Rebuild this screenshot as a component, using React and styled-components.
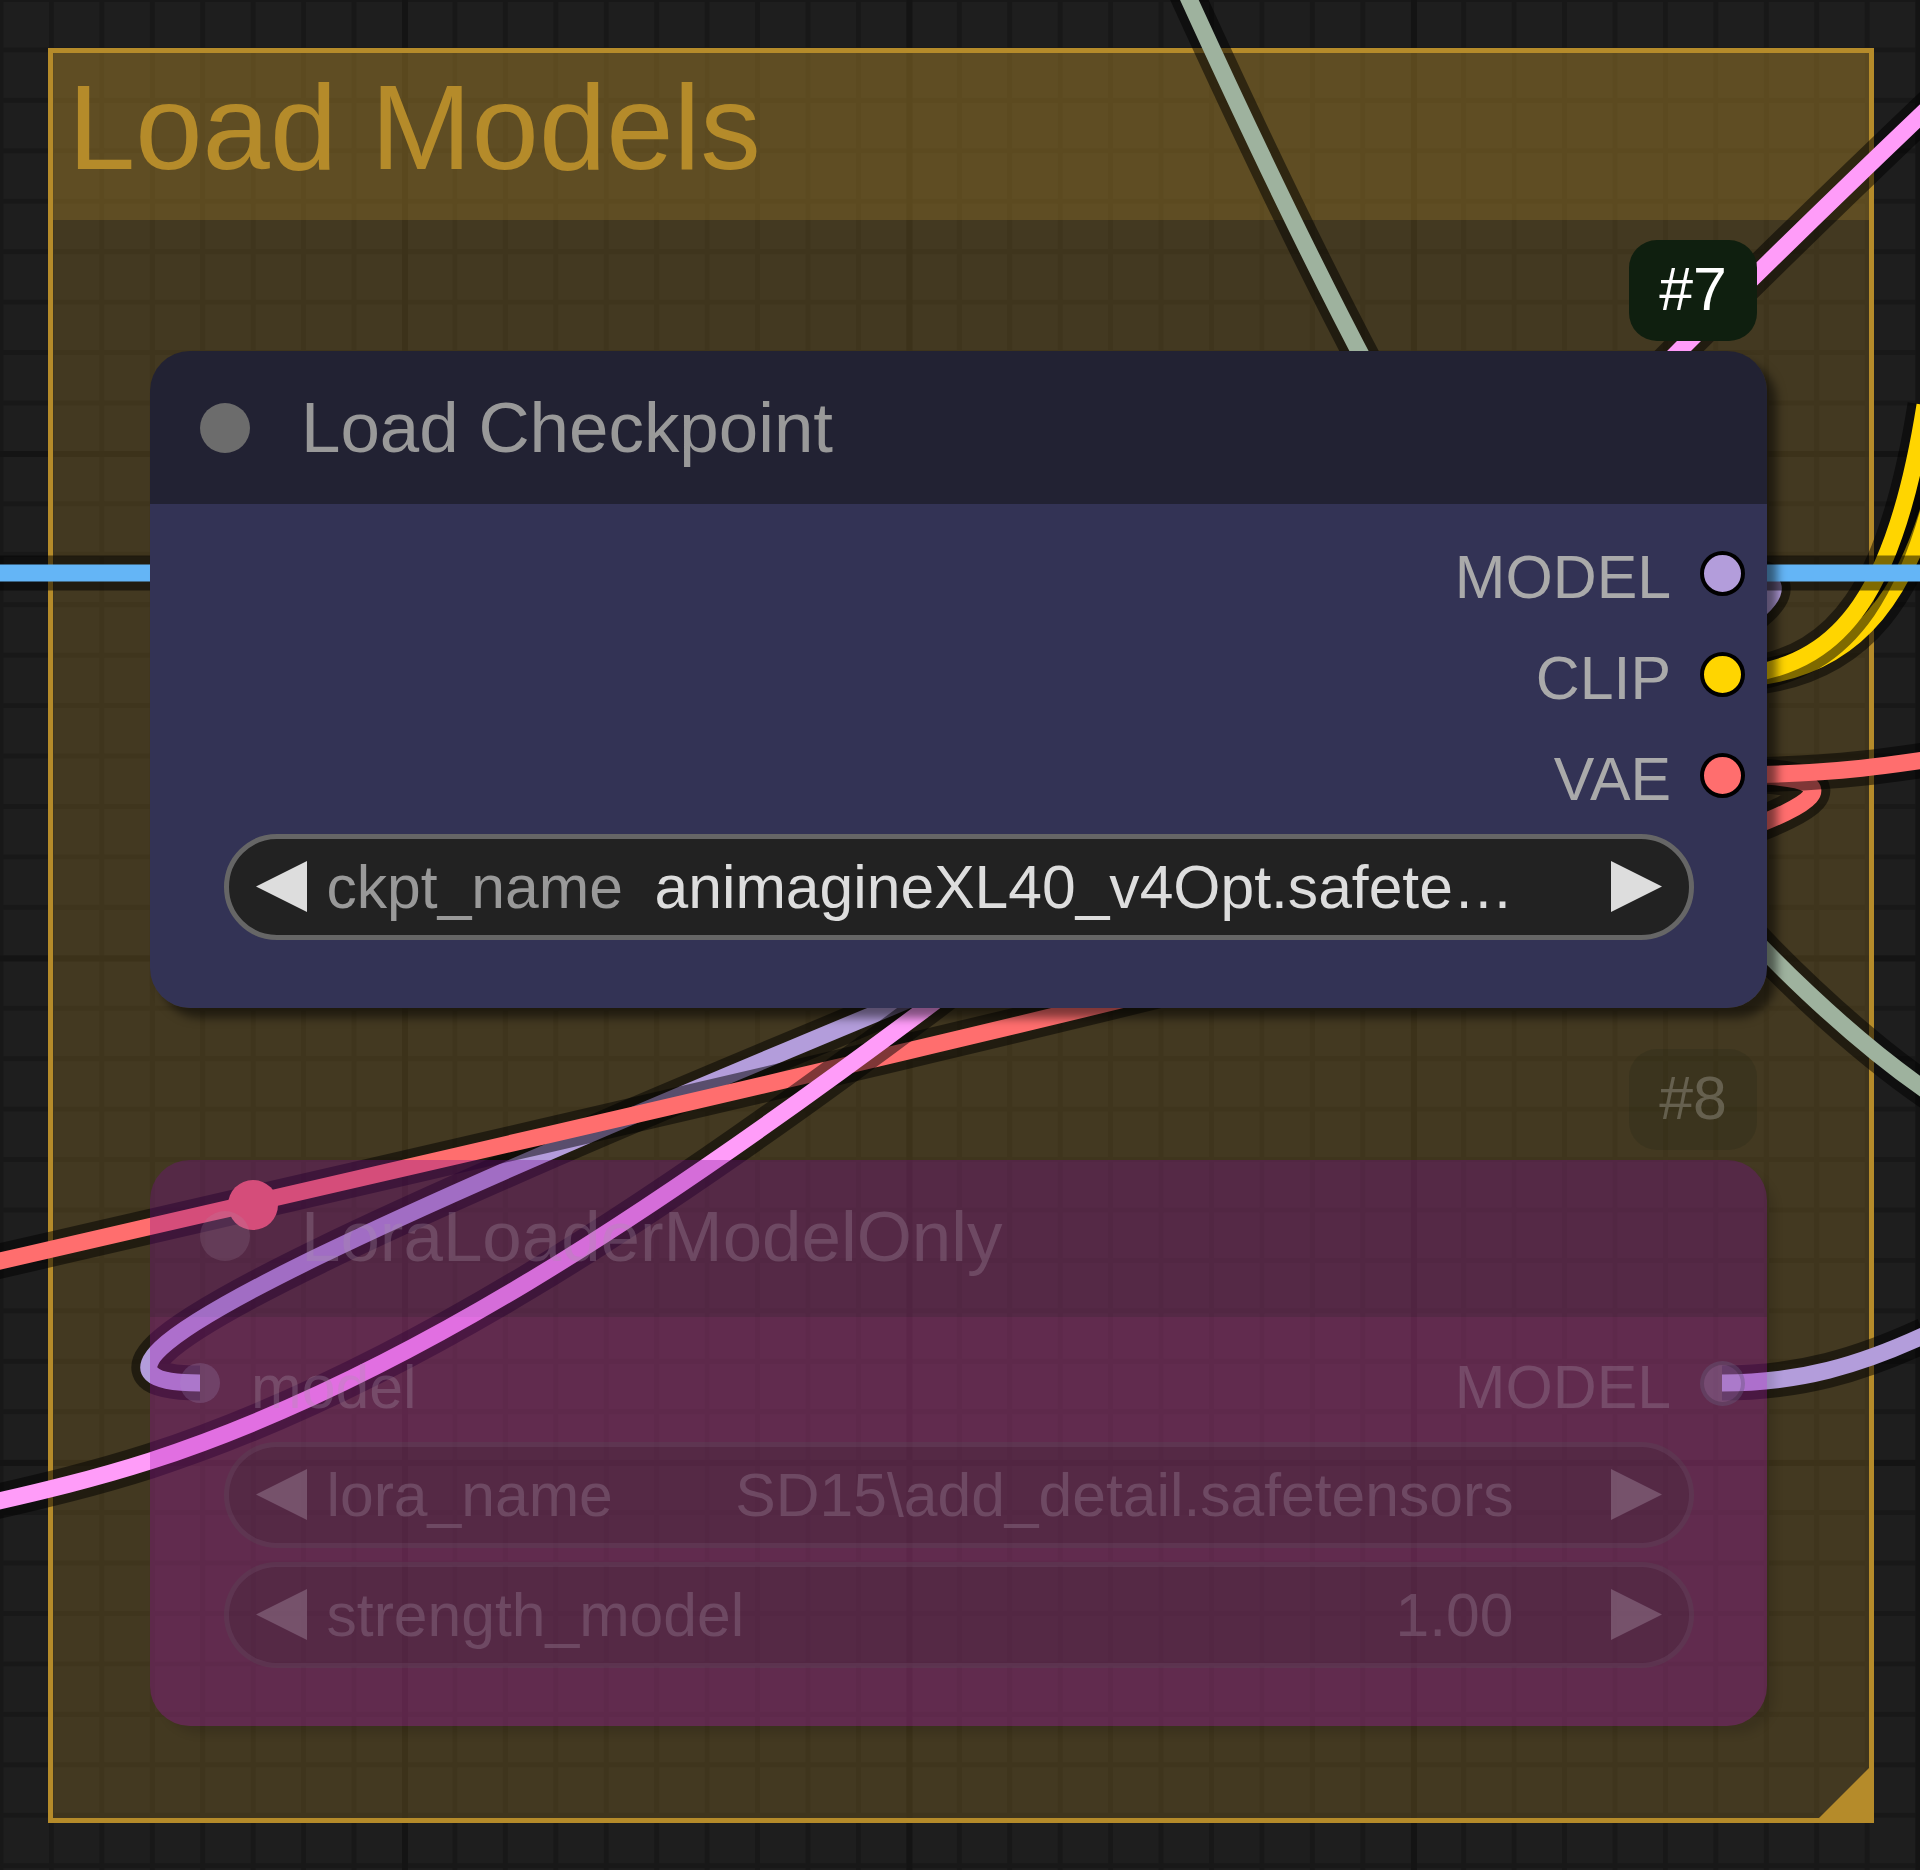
import React from "react";
import styled, { createGlobalStyle } from "styled-components";

const Global = createGlobalStyle`
  html, body { margin: 0; padding: 0; background: #1e1e1e; }
  #root { width: 1920px; height: 1870px; }
`;

const Canvas = styled.div`
  position: relative;
  width: 1920px;
  height: 1870px;
  overflow: hidden;
  font-family: "Liberation Sans", Arial, sans-serif;
  background-color: #1e1e1e;
  background-image:
    linear-gradient(to right, #141414 6px, transparent 6px),
    linear-gradient(to bottom, #141414 6px, transparent 6px),
    linear-gradient(to right, #181818 5px, transparent 5px),
    linear-gradient(to bottom, #181818 5px, transparent 5px);
  background-size: 504.5px 504.5px, 504.5px 504.5px, 50.45px 50.45px, 50.45px 50.45px;
  background-position: 402px 451px, 402px 451px, -1.5px -3px, -1.5px -3px;
`;

const Group = styled.section`
  position: absolute;
  left: 48px;
  top: 48px;
  width: 1826px;
  height: 1775px;
  box-sizing: border-box;
  border: 5px solid #b58b2a;
  background: rgba(181, 139, 42, 0.25);
`;

const GroupHeader = styled.header`
  height: 167px;
  box-sizing: border-box;
  padding: 7px 0 0 15px;
  background: rgba(181, 139, 42, 0.25);
`;

const GroupTitle = styled.h1`
  margin: 0;
  font-size: 121px;
  font-weight: 400;
  line-height: 135px;
  color: #b58b2a;
`;

const Resizer = styled.svg`
  position: absolute;
  right: 0;
  bottom: 0;
  width: 50px;
  height: 50px;
`;

const Links = styled.svg`
  position: absolute;
  inset: 0;
  width: 1920px;
  height: 1870px;
  fill: none;
`;

const Node = styled.article`
  position: absolute;
  left: 150px;
  top: ${(p) => p.$top}px;
  width: 1617px;
  border-radius: 40px;
  display: flex;
  flex-direction: column;
  box-shadow: ${(p) =>
    p.$bypassed
      ? "10px 10px 10px -2px rgba(0, 0, 0, 0.12)"
      : "10px 10px 10px rgba(0, 0, 0, 0.5)"};
`;

const NodeTitle = styled.header`
  height: ${(p) => (p.$bypassed ? 157 : 153)}px;
  box-sizing: border-box;
  padding: 0 0 ${(p) => (p.$bypassed ? 4 : 0)}px 50px;
  display: flex;
  align-items: center;
  gap: 51px;
  border-radius: 40px 40px 0 0;
  font-size: 70.9px;
  color: ${(p) => (p.$bypassed ? "rgba(170, 150, 170, 0.3)" : "#999999")};
  background: ${(p) => (p.$bypassed ? "rgba(125, 10, 150, 0.32)" : "#222233")};
`;

const TitleDot = styled.span`
  width: 50px;
  height: 50px;
  border-radius: 50%;
  flex: none;
  background: ${(p) => (p.$bypassed ? "rgba(170, 150, 170, 0.18)" : "#6c6c6c")};
`;

const NodeBody = styled.div`
  box-sizing: border-box;
  height: ${(p) => p.$height}px;
  padding: ${(p) => p.$padTop}px 0 0;
  display: flex;
  flex-direction: column;
  border-radius: 0 0 40px 40px;
  background: ${(p) => (p.$bypassed ? "rgba(163, 15, 175, 0.32)" : "#333355")};
`;

const SlotRow = styled.div`
  height: 101px;
  flex: none;
  display: flex;
  align-items: center;
  padding: 0 22.5px 0 30px;
`;

const SlotLabel = styled.span`
  font-size: 60.8px;
  line-height: 70px;
  padding-top: 7px;
  color: ${(p) => (p.$bypassed ? "rgba(170, 150, 170, 0.3)" : "#aaaaaa")};
  margin-left: ${(p) => (p.$input ? "31px" : "auto")};
`;

const OutputDot = styled.span`
  width: 45px;
  height: 45px;
  box-sizing: border-box;
  flex: none;
  margin-left: 28.5px;
  border-radius: 50%;
  border: 4.5px solid ${(p) => (p.$bypassed ? "rgba(0, 0, 0, 0.16)" : "#000000")};
  background: ${(p) => p.$color};
`;

const InputDot = styled.span`
  width: 40px;
  height: 40px;
  flex: none;
  border-radius: 50%;
  background: ${(p) => p.$color};
`;

const Widget = styled.div`
  flex: none;
  box-sizing: border-box;
  width: 1470px;
  height: 106px;
  margin: ${(p) => p.$top}px 0 0 73.5px;
  padding: 0 27px;
  display: flex;
  align-items: center;
  border-radius: 53px;
  font-size: 60.6px;
  white-space: nowrap;
  border: 5px solid ${(p) => (p.$bypassed ? "rgba(150, 130, 150, 0.14)" : "#666666")};
  background: ${(p) => (p.$bypassed ? "rgba(34, 34, 34, 0.18)" : "#222222")};
`;

const Arrow = styled.svg`
  width: 51px;
  height: 51px;
  flex: none;
  fill: ${(p) => (p.$bypassed ? "rgba(190, 170, 190, 0.32)" : "#dddddd")};
`;

const WidgetLabel = styled.span`
  margin-left: 20px;
  color: ${(p) => (p.$bypassed ? "rgba(170, 150, 170, 0.3)" : "#999999")};
`;

const WidgetValue = styled.span`
  margin-left: auto;
  margin-right: 97px;
  color: ${(p) => (p.$bypassed ? "rgba(170, 150, 170, 0.3)" : "#dddddd")};
`;

const Badge = styled.div`
  position: absolute;
  right: 10px;
  top: ${(p) => p.$top}px;
  width: 128px;
  height: 101px;
  box-sizing: border-box;
  padding-bottom: ${(p) => (p.$faded ? 4 : 2)}px;
  border-radius: 28px;
  display: flex;
  align-items: center;
  justify-content: center;
  font-size: 60.8px;
  color: ${(p) => (p.$faded ? "rgba(255, 255, 255, 0.22)" : "#ffffff")};
  background: ${(p) => (p.$faded ? "rgba(15, 31, 15, 0.14)" : "#0f1f0f")};
`;

const LinkPath = ({ d, color }) => (
  <g>
    <path d={d} stroke="rgba(0,0,0,0.5)" strokeWidth="35" />
    <path d={d} stroke={color} strokeWidth="17" />
  </g>
);

const links = [
  { d: "M1178,-25 C1228,85 1295,230 1370,372", color: "#9eb29e" },
  { d: "M1700,880 C1760,950 1850,1040 1940,1100", color: "#9eb29e" },
  { d: "M1722,573 C2147,573 -225,1383 200,1383", color: "#b39ddb" },
  { d: "M1722,775 C2508,775 -2086,1650 -1300,1650", color: "#ff6e6e" },
  { d: "M1722,775 C1900,775 1950,750 2200,720", color: "#ff6e6e" },
  { d: "M1750,678 C1850,668 1920,605 1950,415", color: "#ffd500" },
  { d: "M1750,674 C1840,660 1895,595 1925,405", color: "#ffd500" },
  { d: "M-10,573 H1930", color: "#64b5f6" },
  {
    d: "M1960,78 C1880,154 1780,250 1680,350 C1450,585 1150,840 925,1009 C650,1215 400,1380 150,1461 C100,1477 50,1490 -50,1512",
    color: "#ff9cf9",
  },
  { d: "M1722,1383 C1800,1383 1860,1365 1925,1335", color: "#b39ddb" },
];

const LeftArrow = ({ $bypassed }) => (
  <Arrow viewBox="0 0 51 51" $bypassed={$bypassed}>
    <polygon points="0,25.5 51,0 51,51" />
  </Arrow>
);

const RightArrow = ({ $bypassed }) => (
  <Arrow viewBox="0 0 51 51" $bypassed={$bypassed}>
    <polygon points="51,25.5 0,0 0,51" />
  </Arrow>
);

const FieldWidget = ({ label, value, top, bypassed }) => (
  <Widget $top={top} $bypassed={bypassed}>
    <LeftArrow $bypassed={bypassed} />
    <WidgetLabel $bypassed={bypassed}>{label}</WidgetLabel>
    <WidgetValue $bypassed={bypassed}>{value}</WidgetValue>
    <RightArrow $bypassed={bypassed} />
  </Widget>
);

export default function App() {
  return (
    <Canvas>
      <Global />
      <Group>
        <GroupHeader>
          <GroupTitle>Load Models</GroupTitle>
        </GroupHeader>
        <Resizer viewBox="0 0 50 50">
          <polygon points="50,0 50,50 0,50" fill="#b58b2a" />
        </Resizer>
      </Group>

      <Links viewBox="0 0 1920 1870">
        {links.map((l) => (
          <LinkPath key={l.d} d={l.d} color={l.color} />
        ))}
        <circle cx="253" cy="1205" r="25" fill="#ff6e6e" />
      </Links>

      <Node $top={351}>
        <Badge $top={-111.5}>#7</Badge>
        <NodeTitle>
          <TitleDot />
          Load Checkpoint
        </NodeTitle>
        <NodeBody $height={504} $padTop={18.5}>
          {[
            ["MODEL", "#b39ddb"],
            ["CLIP", "#ffd500"],
            ["VAE", "#ff6e6e"],
          ].map(([name, color]) => (
            <SlotRow key={name}>
              <SlotLabel>{name}</SlotLabel>
              <OutputDot $color={color} />
            </SlotRow>
          ))}
          <FieldWidget top={8} label="ckpt_name" value="animagineXL40_v4Opt.safete…" />
        </NodeBody>
      </Node>

      <Node $top={1159.5} $bypassed>
        <Badge $top={-110.5} $faded>#8</Badge>
        <NodeTitle $bypassed>
          <TitleDot $bypassed />
          LoraLoaderModelOnly
        </NodeTitle>
        <NodeBody $bypassed $height={409.5} $padTop={16}>
          <SlotRow>
            <InputDot $color="rgba(170, 150, 200, 0.22)" />
            <SlotLabel $input $bypassed>model</SlotLabel>
            <SlotLabel $bypassed>MODEL</SlotLabel>
            <OutputDot $bypassed $color="rgba(170, 150, 200, 0.3)" />
          </SlotRow>
          <FieldWidget top={8} bypassed label="lora_name" value="SD15\add_detail.safetensors" />
          <FieldWidget top={14} bypassed label="strength_model" value="1.00" />
        </NodeBody>
      </Node>
    </Canvas>
  );
}
